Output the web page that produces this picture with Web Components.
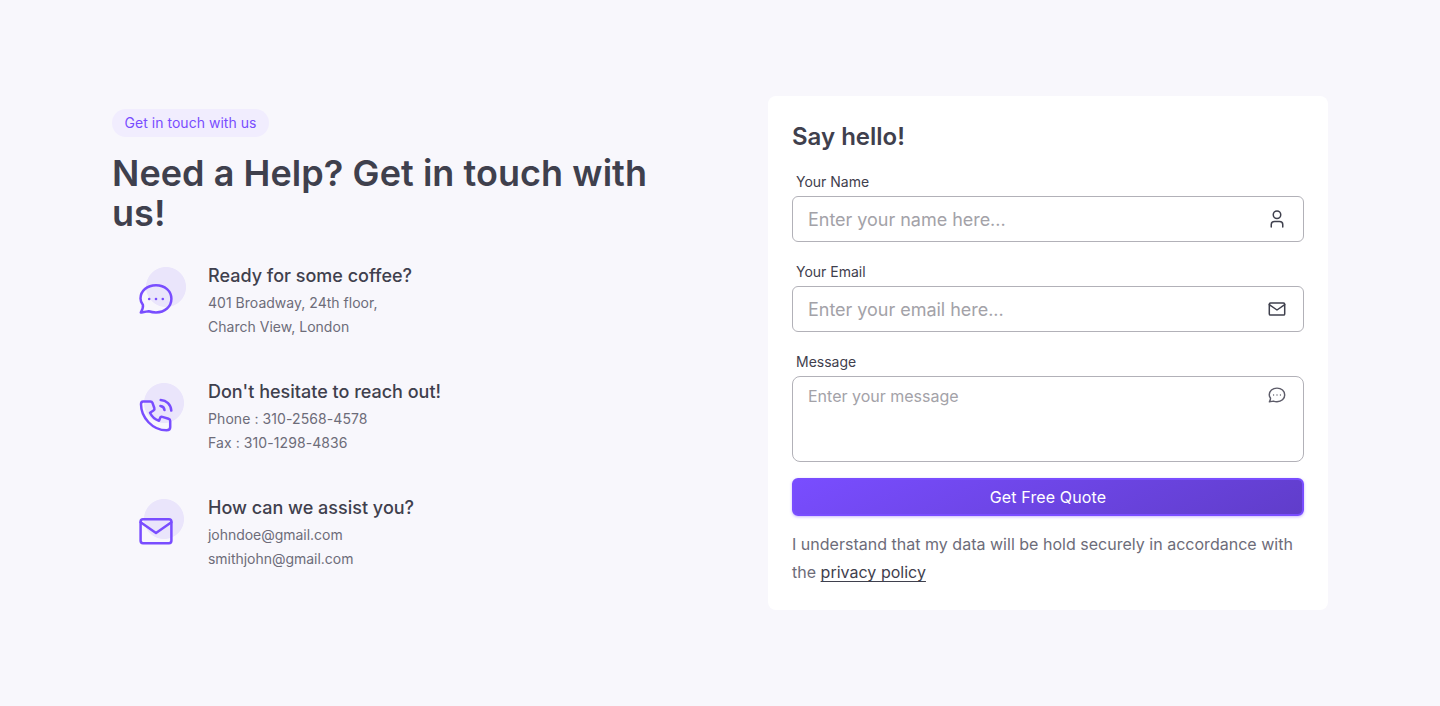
<!DOCTYPE html>
<html lang="en">
<head>
<meta charset="utf-8">
<title>Contact</title>
<style>
body{margin:0;background:#f8f7fc;font-family:Inter,"Liberation Sans",sans-serif;color:#3f404d}
</style>
</head>
<body>
<contact-page></contact-page>
<script>
const define=(name,html)=>{
  const t=document.createElement('template');
  t.innerHTML=html;
  customElements.define(name,class extends HTMLElement{
    constructor(){super();this.attachShadow({mode:'open'}).append(t.content.cloneNode(true));}
  });
};
const icons={
  chat:'<path d="M20 6.200c8.900 0 15.400 5.800 15.400 13.600S28.900 33.400 20 33.400c-2.800 0-5.200-.5-7.300-1.200-2.600.3-4.800.8-7.900 1.400 1.300-2.700 2.700-5 2.100-7.700-1.600-1.900-2.400-3.900-2.400-6.400C4.500 12 11.100 6.200 20 6.200Z"/><g fill="currentColor" stroke="none"><circle cx="13.200" cy="20" r="1.300"/><circle cx="20" cy="20" r="1.300"/><circle cx="26.800" cy="20" r="1.300"/></g>',
  phone:'<path d="M7.100 6.400h7.300q1.500 0 2 1.300l1.900 5.300q.6 1.600-.8 2.500L14 17.700c1.700 3.500 5.100 6.800 9 8l1-2.500q.6-1.800 2.300-1.300l6.200 1.900q1.700.5 1.700 2.200v6.300q0 3-3.700 3C16.500 35.300 5 22.500 5 9.300q0-2.900 2.100-2.900ZM24.700 5c5.800.4 10.200 4.700 10.600 10.600M24.400 11c2.500.3 3.900 1.700 4.100 4.100"/>',
  mail:'<rect x="4.600" y="8.200" width="30.800" height="24" rx="2.400"/><path d="M4.600 11.300 20 22l15.400-10.700"/>',
  user:'<ellipse cx="20" cy="11.500" rx="7.500" ry="7.500"/><path d="M8.500 36V31c0-4 2.500-6 6.500-6h10c4 0 6.500 2 6.500 6v5"/>'
};
customElements.define('line-icon',class extends HTMLElement{
  constructor(){
    super();
    this.attachShadow({mode:'open'}).innerHTML=`<style>:host{display:block;width:40px;height:40px}svg{display:block;width:100%;height:100%;fill:none;stroke:currentColor;stroke-width:var(--stroke,2.500);stroke-linecap:round;stroke-linejoin:round}</style><svg viewBox="0 0 40 40">${icons[this.getAttribute('name')]}</svg>`;
  }
});
define('pill-badge',`<style>:host{display:block;width:max-content;box-sizing:border-box;height:28px;padding:0 12.500px;border-radius:14px;background:#f1edfe;color:#794dff;font-size:14px;line-height:28px;letter-spacing:.03px}</style><slot></slot>`);
define('contact-item',`<style>
:host{display:grid;grid-template-columns:96px 1fr;height:116px}
.art{padding:20px 0 0 24px;background:radial-gradient(circle at var(--cx,52px) 28px,#eae5fb 19.600px,transparent 20.400px) no-repeat;color:#794dff}
h3{margin:0;padding-top:1px;font-weight:500;font-size:18px;line-height:31px}
.text{color:#6d6c79;font-size:14px;line-height:24px;letter-spacing:var(--track,0)}
</style><div class="art"><slot name="icon"></slot></div><div><h3><slot name="title"></slot></h3><div class="text"><slot></slot></div></div>`);
define('contact-intro',`<style>
:host{display:block;padding-top:13px}
h1{margin:16px 0 26px;font-size:36px;line-height:40px;font-weight:600;letter-spacing:.06px}
.c{--cx:54px;--track:.02px}
.p{--track:.08px}
.m{--track:-.03px}
</style>
<pill-badge>Get in touch with us</pill-badge>
<h1>Need a Help? Get in touch with us!</h1>
<contact-item class="c"><line-icon slot="icon" name="chat"></line-icon><span slot="title">Ready for some coffee?</span>401 Broadway, 24th floor,<br>Charch View, London</contact-item>
<contact-item class="p"><line-icon slot="icon" name="phone"></line-icon><span slot="title">Don't hesitate to reach out!</span>Phone : 310-2568-4578<br>Fax : 310-1298-4836</contact-item>
<contact-item class="m"><line-icon slot="icon" name="mail"></line-icon><span slot="title">How can we assist you?</span>johndoe@gmail.com<br>smithjohn@gmail.com</contact-item>`);
define('form-field',`<style>
:host{display:block;margin-bottom:16px}
.label{display:block;padding-left:4px;height:28px;line-height:28px;font-size:14px}
.box{display:flex;justify-content:space-between;align-items:center;box-sizing:border-box;height:46px;border:1px solid #b2b1b8;border-radius:6px;padding:0 16px 0 15px;font-size:18px;letter-spacing:-.03px;color:#a3a2a8}
:host([multi]) .box{height:86px;align-items:flex-start;padding-top:8px;font-size:16px;line-height:22px;letter-spacing:0;border-radius:8px}
::slotted(line-icon){width:20px;height:20px;color:#3f404d;--stroke:3}
:host([multi]) ::slotted(line-icon){color:#5c5b68;--stroke:2.900}
</style><label class="label"><slot name="label"></slot></label><div class="box"><span><slot></slot></span><slot name="icon"></slot></div>`);
define('submit-button',`<style>
:host{display:block}
button{display:block;width:100%;height:38px;padding:0;border:2px solid #794dff;border-radius:6px;background:linear-gradient(155deg,#794dff,#603dca) padding-box,linear-gradient(#794dff,#794dff) border-box;color:#fff;font:400 16px/34px Inter,sans-serif;letter-spacing:.14px;box-shadow:0 1px 3px #794dff66}
</style><button type="button"><slot></slot></button>`);
define('contact-form',`<style>
:host{display:block;box-sizing:border-box;height:514px;background:#fff;border-radius:8px;padding:25px 24px 24px}
h2{margin:0 0 15px;font-size:24px;line-height:32px;font-weight:600}
.last{margin-bottom:16px}
p{margin:14px 0 0;font-size:16px;line-height:28px;color:#6d6c79;letter-spacing:.015px}
a{color:#3f404d;text-decoration:underline 1px;text-underline-offset:3px;text-decoration-skip-ink:none}
</style>
<h2>Say hello!</h2>
<form-field><span slot="label">Your Name</span>Enter your name here...<line-icon slot="icon" name="user"></line-icon></form-field>
<form-field><span slot="label">Your Email</span>Enter your email here...<line-icon slot="icon" name="mail"></line-icon></form-field>
<form-field class="last" multi><span slot="label">Message</span>Enter your message<line-icon slot="icon" name="chat"></line-icon></form-field>
<submit-button>Get Free Quote</submit-button>
<p><span>I understand that my data will be hold securely in accordance with</span><br><span>the </span><a>privacy policy</a></p>`);
define('contact-page',`<style>
:host{display:grid;grid-template-columns:560px 560px;gap:96px;justify-content:center;box-sizing:border-box;height:706px;padding-top:96px;align-items:start}
</style><contact-intro></contact-intro><contact-form></contact-form>`);
</script>
</body>
</html>
